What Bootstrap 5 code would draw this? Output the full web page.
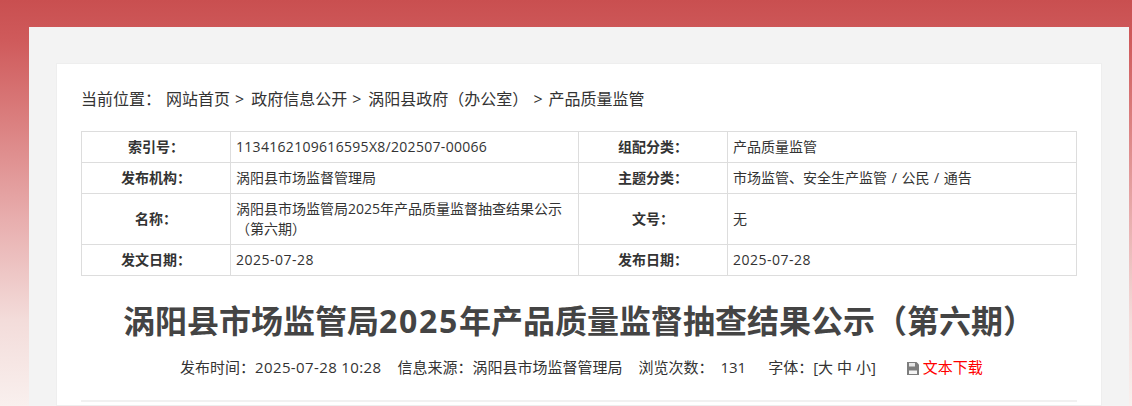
<!DOCTYPE html>
<html lang="zh-CN">
<head>
<meta charset="utf-8">
<title>产品质量监督抽查结果公示</title>
<link href="https://cdn.jsdelivr.net/npm/bootstrap@5.3.0/dist/css/bootstrap.min.css" rel="stylesheet">
<style>
html,body{height:406px;overflow:hidden}
body{background:linear-gradient(180deg,#c94f50 0,#cf5a5b 40px,#d97a7a 110px,#e8aeae 220px,#f3dcda 320px,#f9f0ee 406px);font-family:"Open Sans","Noto Sans CJK SC",sans-serif;color:#333}
.shell{width:1100px;margin:27px 0 0 29px;background:#f3f3f3;padding:36px 27px 0;height:379px}
.sheet{background:#fff;border:1px solid #eee;height:343px;padding:0 24px}
.crumbs{height:67px;font-size:16px;line-height:22px;padding-top:24px}
.crumbs span{margin-right:5px}
.crumbs .gt{margin-right:7px}
.crumbs .gt-last{margin-right:6px}
.info{width:996px;font-size:14px;table-layout:fixed;margin:0;border-color:#ddd;color:#333}
.info td{padding:0 5px;line-height:20px;vertical-align:middle;height:31px;border:1px solid #ddd;color:#333}
.info .lbl{font-weight:700;text-align:center;width:149px}
.info .val{width:348px}
.info .tall td{height:51px}
.wide-sp{word-spacing:1px}
.num{letter-spacing:.3px}
.day{letter-spacing:.5px}
.headline{font-size:32px;font-weight:700;text-align:center;line-height:44px;margin:23px 0 0;color:#444}
.yr{letter-spacing:1.7px}
.meta{font-size:15px;line-height:22px;margin-top:13px;padding-left:99px}
.meta .sp1{margin-right:16px}
.meta .sp2{margin-right:22px}
.meta .cnt{margin-left:3px}
.meta .stamp{letter-spacing:.38px}
.meta a{color:red;text-decoration:none}
.rule{height:2px;background:#f1f1f1;margin-top:22px;width:996px}
.disk{width:12px;height:13px;margin:0 4px 0 9px;vertical-align:-2px}
</style>
</head>
<body>
<div class="shell">
<div class="sheet">
<div class="crumbs"><span>当前位置：</span><span>网站首页</span><span class="gt">&gt;</span><span>政府信息公开</span><span class="gt">&gt;</span><span>涡阳县政府（办公室）</span><span class="gt-last">&gt;</span><span>产品质量监管</span></div>
<table class="table table-bordered info">
<tr><td class="lbl">索引号：</td><td class="val num">1134162109616595X8/202507-00066</td><td class="lbl">组配分类：</td><td>产品质量监管</td></tr>
<tr><td class="lbl">发布机构：</td><td class="val">涡阳县市场监督管理局</td><td class="lbl">主题分类：</td><td class="wide-sp">市场监管、安全生产监管 / 公民 / 通告</td></tr>
<tr class="tall"><td class="lbl">名称：</td><td class="val">涡阳县市场监管局2025年产品质量监督抽查结果公示（第六期）</td><td class="lbl">文号：</td><td>无</td></tr>
<tr><td class="lbl">发文日期：</td><td class="val day">2025-07-28</td><td class="lbl">发布日期：</td><td class="day">2025-07-28</td></tr>
</table>
<h1 class="headline">涡阳县市场监管局<span class="yr">2025</span>年产品质量监督抽查结果公示（第六期）</h1>
<div class="meta"><span class="sp1">发布时间：<span class="stamp">2025-07-28 10:28</span></span><span class="sp1">信息来源：涡阳县市场监督管理局</span><span class="sp2">浏览次数：<span class="cnt">&nbsp;131</span></span><span class="sp2">字体：[大 中 小]</span><svg class="disk" viewBox="0 0 12 13"><path fill="#7d7d7d" d="M0 0h9.5L12 2.5V13H0z"/><path fill="#e6e6e6" d="M2 1h6v3.5H2z"/><path fill="#f4f4f4" d="M2 8.5h8V12H2z"/></svg><a href="#">文本下载</a></div>
<div class="rule"></div>
</div>
</div>
</body>
</html>
